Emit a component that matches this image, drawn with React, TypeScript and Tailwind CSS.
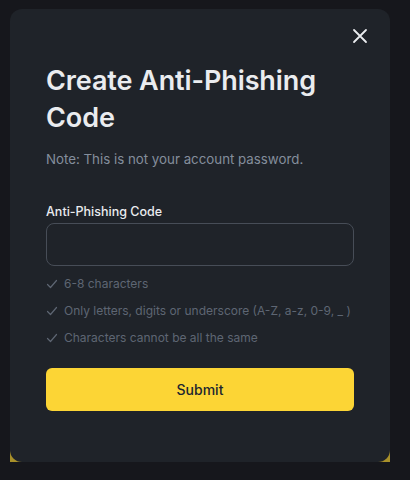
import React, { useState } from "react"

const rules = [
    "6-8 characters",
    "Only letters, digits or underscore (A-Z, a-z, 0-9, _ )",
    "Characters cannot be all the same",
]

const Check: React.FC = () => (
    <svg width="12" height="12" viewBox="0 0 12 12" fill="none" stroke="#5e6673" strokeWidth="1.2" strokeLinecap="round" strokeLinejoin="round">
        <path d="M1.5 6.5 L4.5 9.5 L10.5 2.5" />
    </svg>
)

const App: React.FC = () => {
    const [code, setCode] = useState("")

    return (
        <main className="min-h-[480px] w-[410px] bg-[#16171c] pt-[9px] pl-[10px]" style={{ fontFamily: "Inter, 'Noto Sans', sans-serif" }}>
            <div className="relative w-[380px] h-[453px]">
                {/* yellow thing behind the dialog */}
                <div className="absolute left-0 right-0 bottom-0 h-[20px] bg-[#a8902a]" />
                <div className="relative h-full rounded-[12px] bg-[#1f2329] px-[36px] pt-[14px]">
                    <div className="flex justify-end -mr-[19px]">
                        <button className="p-1">
                            <svg width="18" height="18" viewBox="0 0 18 18" fill="none" stroke="#eaecef" strokeWidth="1.8" strokeLinecap="round">
                                <path d="M3 3 L15 15 M15 3 L3 15" />
                            </svg>
                        </button>
                    </div>
                    <h1 className="mt-[13px] text-[27px] leading-[37px] font-semibold text-[#eaecef] tracking-[-0.1px]">
                        Create Anti-Phishing Code
                    </h1>
                    <p className="mt-[14px] text-[13.3px] leading-[18px] text-[#848e9c]">
                        Note: This is not your account password.
                    </p>
                    <label className="block mt-[36px] text-[12.5px] leading-[16px] font-medium text-[#eaecef]">
                        Anti-Phishing Code
                    </label>
                    <input
                        value={code}
                        onChange={(e) => setCode(e.target.value)}
                        className="mt-[3px] w-full h-[43px] rounded-[8px] border border-[#474d57] bg-transparent px-3 text-[14px] text-[#eaecef] outline-none"
                    />
                    <ul className="mt-[10px] flex flex-col gap-[11px]">
                        {rules.map((r) => (
                            <li key={r} className="flex items-center gap-[6px] text-[12px] leading-[16px] text-[#5e6673]">
                                <Check />
                                <span>{r}</span>
                            </li>
                        ))}
                    </ul>
                    <button className="mt-[22px] w-full h-[43px] rounded-[6px] bg-[#fcd535] text-[14px] font-medium text-[#202630]">
                        Submit
                    </button>
                </div>
            </div>
        </main>
    )
}

export default App
